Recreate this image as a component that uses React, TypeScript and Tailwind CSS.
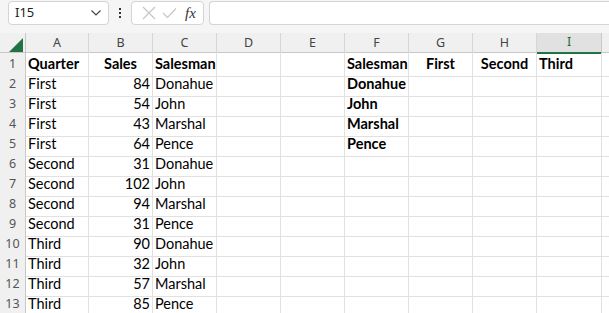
import React from "react";

const cols = ["A", "B", "C", "D", "E", "F", "G", "H", "I"];

type Cell = { t?: string; b?: boolean; align?: "l" | "c" | "r" };

const data: Cell[][] = [
  [{ t: "Quarter", b: true }, { t: "Sales", b: true, align: "c" }, { t: "Salesman", b: true }, {}, {}, { t: "Salesman", b: true }, { t: "First", b: true, align: "c" }, { t: "Second", b: true, align: "c" }, { t: "Third", b: true }],
  [{ t: "First" }, { t: "84", align: "r" }, { t: "Donahue" }, {}, {}, { t: "Donahue", b: true }, {}, {}, {}],
  [{ t: "First" }, { t: "54", align: "r" }, { t: "John" }, {}, {}, { t: "John", b: true }, {}, {}, {}],
  [{ t: "First" }, { t: "43", align: "r" }, { t: "Marshal" }, {}, {}, { t: "Marshal", b: true }, {}, {}, {}],
  [{ t: "First" }, { t: "64", align: "r" }, { t: "Pence" }, {}, {}, { t: "Pence", b: true }, {}, {}, {}],
  [{ t: "Second" }, { t: "31", align: "r" }, { t: "Donahue" }, {}, {}, {}, {}, {}, {}],
  [{ t: "Second" }, { t: "102", align: "r" }, { t: "John" }, {}, {}, {}, {}, {}, {}],
  [{ t: "Second" }, { t: "94", align: "r" }, { t: "Marshal" }, {}, {}, {}, {}, {}, {}],
  [{ t: "Second" }, { t: "31", align: "r" }, { t: "Pence" }, {}, {}, {}, {}, {}, {}],
  [{ t: "Third" }, { t: "90", align: "r" }, { t: "Donahue" }, {}, {}, {}, {}, {}, {}],
  [{ t: "Third" }, { t: "32", align: "r" }, { t: "John" }, {}, {}, {}, {}, {}, {}],
  [{ t: "Third" }, { t: "57", align: "r" }, { t: "Marshal" }, {}, {}, {}, {}, {}, {}],
  [{ t: "Third" }, { t: "85", align: "r" }, { t: "Pence" }, {}, {}, {}, {}, {}, {}],
];

const gridCols = "grid grid-cols-[26px_63px_64px_64px_64px_64px_64px_64px_64px_65px_1fr]";

export default function App() {
  return (
    <div className="w-[609px] h-[313px] overflow-hidden bg-white font-['Lato',sans-serif]">
      {/* formula bar */}
      <div className="h-[33px] bg-[#f5f5f5] flex items-start pt-[1px] gap-0">
        <div className="ml-[8px] w-[101px] h-[24px] bg-white border border-[#d4d4d4] rounded-[4px] flex items-center justify-between pl-[6px] pr-[6px]">
          <span className="text-[13px] text-[#222] font-['Noto_Sans',sans-serif]">I15</span>
          <svg width="12" height="8" viewBox="0 0 12 8">
            <path d="M1.5 1.5 L6 6 L10.5 1.5" fill="none" stroke="#444" strokeWidth="1.2" />
          </svg>
        </div>
        <div className="w-[22px] h-[24px] flex flex-col items-center justify-center gap-[2px]">
          <span className="w-[2px] h-[2px] bg-[#333]" />
          <span className="w-[2px] h-[2px] bg-[#333]" />
          <span className="w-[2px] h-[2px] bg-[#333]" />
        </div>
        <div className="w-[73px] h-[24px] bg-white border border-[#d4d4d4] rounded-[4px] flex items-center pl-[10px] gap-[6px]">
          <svg width="14" height="14" viewBox="0 0 14 14">
            <path d="M1 1 L13 13 M13 1 L1 13" stroke="#c4c4c4" strokeWidth="1.1" />
          </svg>
          <svg width="15" height="12" viewBox="0 0 15 12">
            <path d="M1 6 L5.5 10.5 L14 1.5" fill="none" stroke="#c4c4c4" strokeWidth="1.1" />
          </svg>
          <span className="ml-[2px] text-[15px] italic text-[#333] font-['Liberation_Serif',serif] leading-none">fx</span>
        </div>
        <div className="ml-[5px] flex-1 h-[24px] bg-white border border-[#d4d4d4] rounded-l-[4px] border-r-0" />
      </div>

      {/* column headers */}
      <div className={`${gridCols} h-[20px] bg-[#f0f0f0] border-b border-[#c8c8c8] text-[12.5px] text-[#444] font-['Noto_Sans',sans-serif]`}>
        <div className="relative border-r border-[#c8c8c8]">
          <svg className="absolute right-[2px] bottom-[2px]" width="14" height="14" viewBox="0 0 14 14">
            <path d="M14 0 L14 14 L0 14 Z" fill="#217346" />
          </svg>
        </div>
        {cols.map((c) =>
          c === "I" ? (
            <div key={c} className="flex items-center justify-center bg-[#e1e1e1] border-r border-[#c8c8c8] border-b-2 border-b-[#217346] text-[#1e6b3f]">
              {c}
            </div>
          ) : (
            <div key={c} className="flex items-center justify-center border-r border-[#d6d6d6]">
              {c}
            </div>
          )
        )}
        <div />
      </div>

      {/* rows */}
      {data.map((row, i) => (
        <div key={i} className={`${gridCols} h-[20px]`}>
          <div className="bg-[#f0f0f0] border-r border-[#c8c8c8] border-b border-b-[#dcdcdc] flex items-center justify-center text-[12.5px] text-[#555] font-['Noto_Sans',sans-serif]">
            {i + 1}
          </div>
          {row.map((cell, j) => (
            <div
              key={j}
              className={`border-r border-b border-[#e1e1e1] flex items-center pb-[1px] px-[2px] text-[14.5px] text-black whitespace-nowrap overflow-visible ${
                cell.b ? "font-bold" : ""
              } ${cell.align === "r" ? "justify-end" : cell.align === "c" ? "justify-center" : "justify-start"}`}
            >
              {cell.t}
            </div>
          ))}
          <div className="border-b border-[#e1e1e1]" />
        </div>
      ))}
    </div>
  );
}
